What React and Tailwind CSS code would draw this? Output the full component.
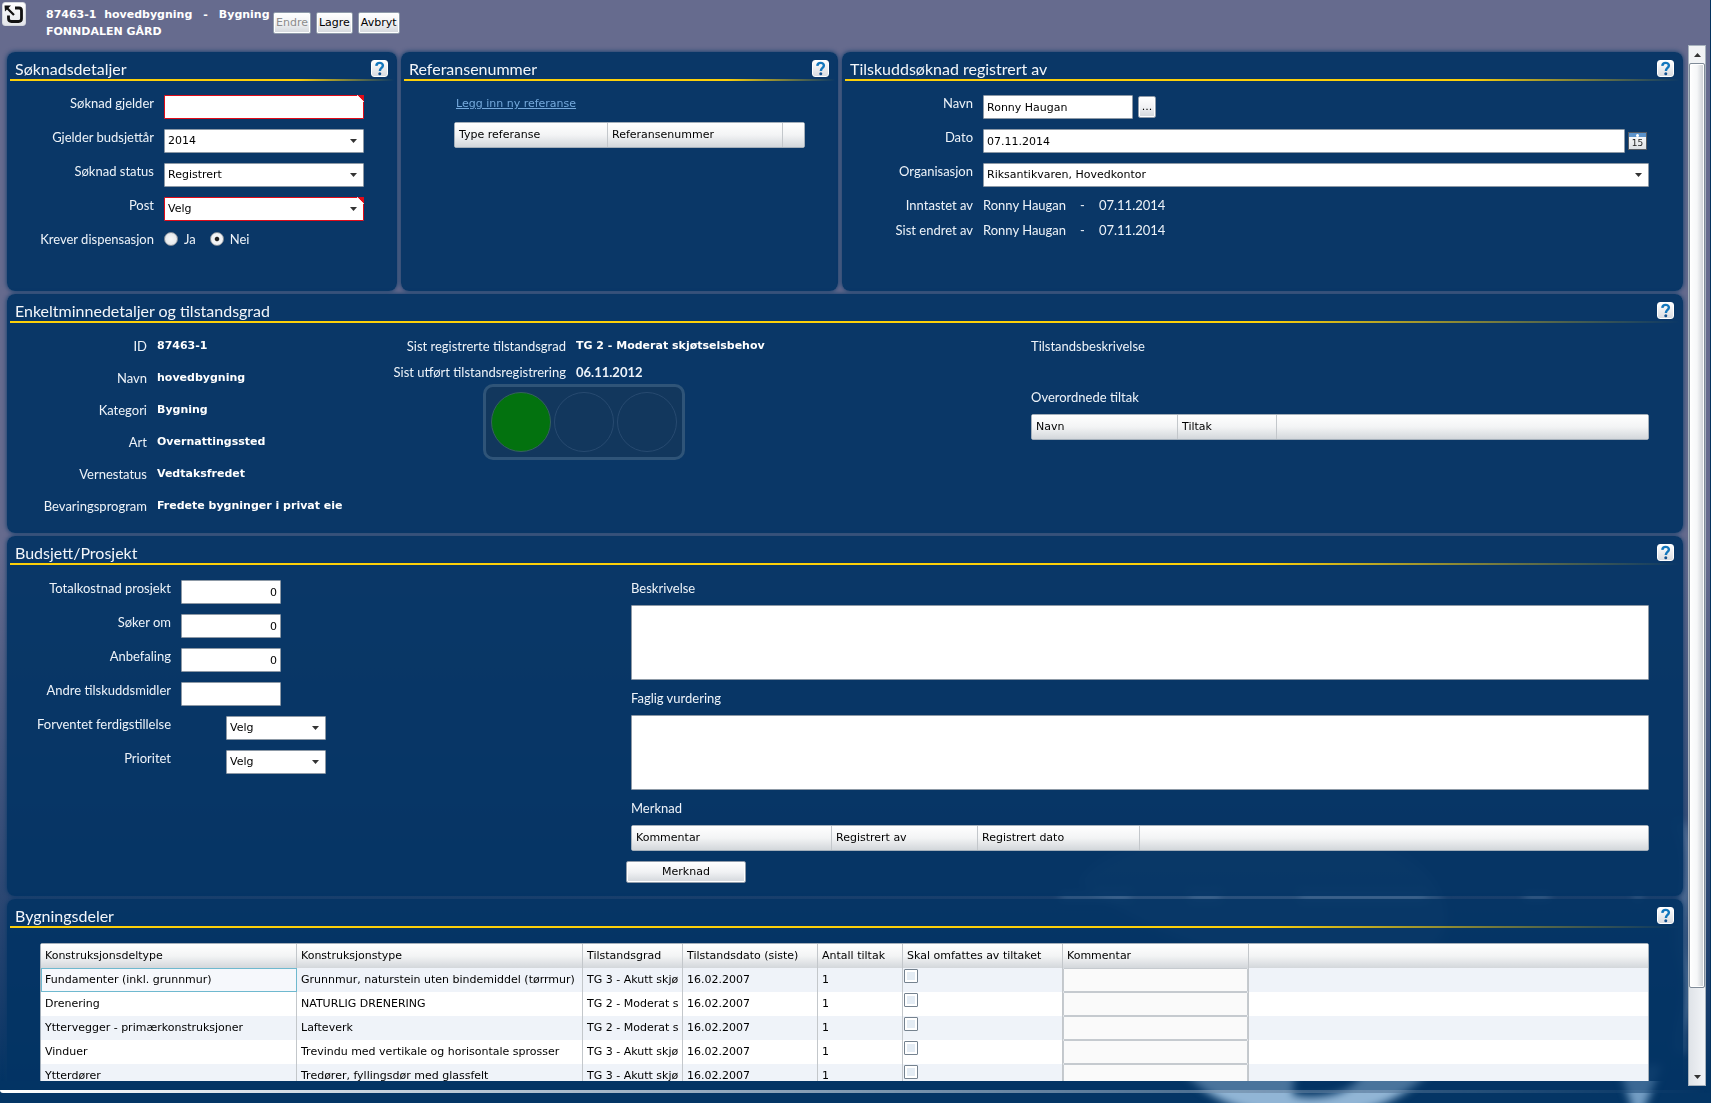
import React from "react";

const LABEL = "font-['Lato',sans-serif] text-[13px] leading-4 text-[#eef3f9]";
const FIELD =
  "h-6 rounded-[1px] border border-[#8d99a6] bg-white px-[3px] font-['DejaVu_Sans',sans-serif] text-[11px] text-black outline-none";
const BUTTON =
  "rounded-[2px] border border-[#8f9baa] bg-linear-to-b from-white via-[#f1f2f4] to-[#d3d7dc] text-[11px] text-black shadow-[inset_0_0_0_1px_#ffffff]";

function HelpButton({ label }) {
  return (
    <button
      type="button"
      aria-label={label}
      className="flex h-[17px] w-[17px] items-center justify-center rounded-[3px] border border-white bg-linear-to-b from-white to-[#d9dce1]"
    >
      <svg viewBox="0 0 16 16" className="h-[15px] w-[15px]" fill="none">
        <path d="M4.6 5.2C4.8 2.9 6.2 2 8.1 2c2.1 0 3.5 1.1 3.5 2.8C11.600 7.400 8.400 7.400 8.400 10.600" stroke="#1377bd" strokeWidth="2.6" />
        <circle cx="8.300" cy="13.600" r="1.600" fill="#12518f" />
      </svg>
    </button>
  );
}

function Panel({ title, className = "", children }) {
  return (
    <section
      className={`flex flex-col rounded-lg bg-[#033464]/93 shadow-[0_0_5px_#083767] ${className}`}
    >
      <header className="px-[3px]">
        <div className="flex h-[27px] items-center justify-between pt-1.5 pr-[6px] pl-[5px]">
          <h2 className="font-['Lato',sans-serif] text-base leading-5 text-[#f3f6fa]">{title}</h2>
          <HelpButton label={`Hjelp: ${title}`} />
        </div>
        <div className="h-0.5 bg-linear-to-r from-[#fdd00a] from-75% to-transparent" />
      </header>
      {children}
    </section>
  );
}

function Row({ label, htmlFor, labelClass, className = "min-h-6", children }) {
  return (
    <div className={`flex gap-[10px] ${className}`}>
      <label htmlFor={htmlFor} className={`${LABEL} shrink-0 text-right ${labelClass}`}>
        {label}
      </label>
      {children}
    </div>
  );
}

function ErrorCorner() {
  return (
    <svg viewBox="0 0 7 7" className="pointer-events-none absolute top-0 right-0 h-[7px] w-[7px]">
      <path d="M0 0H7V7Z" fill="#e00b18" />
      <path d="M0 0L7 7" stroke="#ffffff" strokeWidth="0.8" />
    </svg>
  );
}

function Select({ id, value, invalid = false, className = "" }) {
  return (
    <div className={`relative ${className}`}>
      <select
        id={id}
        defaultValue={value}
        className={`${FIELD} block w-full appearance-none ${invalid ? "border-[#e00b18]" : ""}`}
      >
        <option>{value}</option>
      </select>
      <svg viewBox="0 0 7 4" className="pointer-events-none absolute top-[10px] right-[7px] h-1 w-[7px]">
        <path d="M0 0H7L3.500 4Z" fill="#333333" />
      </svg>
      {invalid && <ErrorCorner />}
    </div>
  );
}

function HeadCells({ columns }) {
  return (
    <>
      {columns.map((name, i) => (
        <th
          key={i}
          className={`h-6 truncate px-1 text-left font-normal ${i < columns.length - 1 ? "border-r border-[#c3c7cb]" : ""}`}
        >
          {name}
        </th>
      ))}
    </>
  );
}

const TABLE =
  "w-full table-fixed border-separate border-spacing-0 rounded-[2px] border border-[#a4afba] text-[11px] leading-4 text-black";
const THEAD = "bg-linear-to-b from-white via-[#f3f4f5] to-[#d3d7db]";

function HeaderTable({ label, widths, columns }) {
  return (
    <table aria-label={label} className={TABLE}>
      <colgroup>
        {widths.map((w, i) => (
          <col key={i} className={w} />
        ))}
      </colgroup>
      <thead className={THEAD}>
        <tr>
          <HeadCells columns={columns} />
        </tr>
      </thead>
    </table>
  );
}

const FACTS = [
  ["ID", "87463-1"],
  ["Navn", "hovedbygning"],
  ["Kategori", "Bygning"],
  ["Art", "Overnattingssted"],
  ["Vernestatus", "Vedtaksfredet"],
  ["Bevaringsprogram", "Fredete bygninger i privat eie"],
];

const AMOUNTS = [
  ["total", "Totalkostnad prosjekt", "0"],
  ["soker", "Søker om", "0"],
  ["anbefaling", "Anbefaling", "0"],
  ["andre", "Andre tilskuddsmidler", ""],
];

const PARTS = [
  ["Fundamenter (inkl. grunnmur)", "Grunnmur, naturstein uten bindemiddel (tørrmur)", "TG 3 - Akutt skjø"],
  ["Drenering", "NATURLIG DRENERING", "TG 2 - Moderat s"],
  ["Yttervegger - primærkonstruksjoner", "Lafteverk", "TG 2 - Moderat s"],
  ["Vinduer", "Trevindu med vertikale og horisontale sprosser", "TG 3 - Akutt skjø"],
  ["Ytterdører", "Tredører, fyllingsdør med glassfelt", "TG 3 - Akutt skjø"],
];

function Backdrop() {
  return (
    <svg
      viewBox="0 0 720 320"
      className="pointer-events-none absolute right-0 bottom-0 h-[320px] w-[720px]"
      fill="none"
    >
      <defs>
        <filter id="soft" x="-10%" y="-10%" width="120%" height="120%">
          <feGaussianBlur stdDeviation="4" />
        </filter>
      </defs>
      <g filter="url(#soft)" stroke="#b3d4f1">
        <path d="M188 280C220 318 260 332 318 332C376 332 412 316 446 280L376 284C368 320 310 320 300 312L304 284Z" fill="#b3d4f1" strokeWidth="4" />
        <path d="M628 282L672 282L652 330L644 330Z" fill="#8fb7dc" stroke="none" />
        <path d="M70 114H140M200 114H230M310 114H436M534 114H560M644 114H652" strokeWidth="7" opacity="0.5" />
        <path d="M690 40C712 90 682 130 694 180S684 240 690 270" strokeWidth="8" opacity="0.35" />
        <path d="M90 100C120 40 400 10 450 110S250 220 90 100Z" fill="#b3d4f1" stroke="none" opacity="0.25" />
      </g>
      <rect x="0" y="298" width="714" height="12" fill="#033464" opacity="0.6" />
    </svg>
  );
}

function ScrollBar() {
  return (
    <div className="flex w-[18px] shrink-0 flex-col border border-[#a7b2bd] bg-linear-to-r from-[#dfe3e8] to-[#f2f4f7]">
      <button type="button" aria-label="Rull opp" className="flex h-[17px] items-center justify-center bg-[#f1f3f5]">
        <svg viewBox="0 0 7 4" className="h-1 w-[7px]">
          <path d="M0 4H7L3.500 0Z" fill="#333333" />
        </svg>
      </button>
      <div className="flex min-h-0 flex-1 flex-col">
        <div className="basis-[92%] rounded-[2px] border border-[#7f8b98] bg-linear-to-r from-white via-[#f6f7f8] to-[#c9cdd2] shadow-[inset_0_0_0_1px_#ffffff]" />
      </div>
      <button type="button" aria-label="Rull ned" className="flex h-[17px] items-center justify-center">
        <svg viewBox="0 0 7 4" className="h-1 w-[7px]">
          <path d="M0 0H7L3.500 4Z" fill="#333333" />
        </svg>
      </button>
    </div>
  );
}

export default function App() {
  return (
    <div className="relative flex h-screen flex-col overflow-hidden border-r border-[#04335f] bg-linear-to-b from-[#666b8e] from-50% to-[#033464] to-98% font-['DejaVu_Sans',sans-serif] text-[11px]">
      <Backdrop />

      <header className="relative flex h-[45px] shrink-0 items-start">
        <button
          type="button"
          aria-label="Tilbake"
          className="mt-0.5 ml-0.5 flex h-6 w-6 items-center justify-center rounded-[3px] border border-[#d5d8de] bg-linear-to-b from-white to-[#e4e6ea]"
        >
          <svg viewBox="0 0 22 22" className="h-[22px] w-[22px]" fill="none" stroke="#111111">
            <path d="M12 5H16Q18.500 5 18.500 7.500V15.500Q18.500 18.500 15.500 18.500H8.500Q5.500 18.500 5.500 15.500V12.500" strokeWidth="2.800" />
            <path d="M3.500 4.500L11 12" strokeWidth="2.200" />
            <path d="M1.500 2.500H8L2 8.500Z" fill="#111111" stroke="none" />
          </svg>
        </button>
        <div className="ml-5 w-[227px] pt-2 font-bold text-white">
          <h1 className="flex h-3 overflow-hidden leading-[14px] whitespace-pre">
            <span>87463-1&nbsp; hovedbygning</span>
            <span className="px-[11px]">-</span>
            <span>Bygning</span>
          </h1>
          <p className="mt-1 leading-4">FONNDALEN GÅRD</p>
        </div>
        <div className="mt-3 flex gap-[5px]">
          <button type="button" disabled className={`${BUTTON} h-[22px] px-[2px] disabled:text-[#8c8c8c]`}>
            Endre
          </button>
          <button type="button" className={`${BUTTON} h-[22px] px-[2px]`}>
            Lagre
          </button>
          <button type="button" className={`${BUTTON} h-[22px] px-[2px]`}>
            Avbryt
          </button>
        </div>
      </header>

      <div className="relative flex min-h-0 flex-1 pr-1">
        <main className="mb-[5px] flex min-w-0 flex-1 flex-col gap-[3px] overflow-hidden pt-[7px] pr-[5px] pl-[7px]">
          <div className="flex shrink-0 gap-1">
            <Panel title="Søknadsdetaljer" className="min-h-[239px] w-[390px]">
              <form className="flex flex-col gap-[10px] pt-[14px] pr-[33px]">
                <Row label="Søknad gjelder" htmlFor="gjelder" labelClass="w-[147px]">
                  <div className="relative flex-1">
                    <input id="gjelder" className={`${FIELD} block w-full border-[#e00b18]`} />
                    <ErrorCorner />
                  </div>
                </Row>
                <Row label="Gjelder budsjettår" htmlFor="aar" labelClass="w-[147px]">
                  <Select id="aar" value="2014" className="flex-1" />
                </Row>
                <Row label="Søknad status" htmlFor="status" labelClass="w-[147px]">
                  <Select id="status" value="Registrert" className="flex-1" />
                </Row>
                <Row label="Post" htmlFor="post" labelClass="w-[147px]">
                  <Select id="post" value="Velg" invalid className="flex-1" />
                </Row>
                <fieldset className="flex gap-[10px]">
                  <legend className={`${LABEL} float-left w-[147px] text-right`}>Krever dispensasjon</legend>
                  <div className="flex gap-[14px]">
                    {["Ja", "Nei"].map((name) => (
                      <label key={name} className={`${LABEL} flex items-center gap-1.5`}>
                        <input
                          type="radio"
                          name="dispensasjon"
                          defaultChecked={name === "Nei"}
                          className="h-[14px] w-[14px] appearance-none rounded-full border border-[#7d8793] bg-white bg-radial from-[#f6f7f8] to-[#dfe2e6] checked:from-[#222222] checked:from-20% checked:to-[#f3f4f5] checked:to-32%"
                        />
                        {name}
                      </label>
                    ))}
                  </div>
                </fieldset>
              </form>
            </Panel>

            <Panel title="Referansenummer" className="min-h-[239px] w-[437px]">
              <div className="pt-[15px] pr-[33px] pl-[53px]">
                <a href="#referanse" className="ml-0.5 block w-fit leading-4 text-[#75a9dc] underline">
                  Legg inn ny referanse
                </a>
                <div className="mt-[10px]">
                  <HeaderTable
                    label="Referanser"
                    widths={["w-[153px]", "w-[175px]", ""]}
                    columns={["Type referanse", "Referansenummer", ""]}
                  />
                </div>
              </div>
            </Panel>

            <Panel title="Tilskuddsøknad registrert av" className="min-h-[239px] flex-1">
              <form className="flex flex-col gap-[10px] pt-[14px] pr-[34px]">
                <Row label="Navn" htmlFor="navn" labelClass="w-[131px]">
                  <input id="navn" defaultValue="Ronny Haugan" className={`${FIELD} w-[150px]`} />
                  <button type="button" aria-label="Velg person" className={`${BUTTON} -ml-[5px] mt-px h-[22px] w-[18px]`}>
                    ...
                  </button>
                </Row>
                <Row label="Dato" htmlFor="dato" labelClass="w-[131px]">
                  <input id="dato" defaultValue="07.11.2014" className={`${FIELD} min-w-0 flex-1`} />
                  <button
                    type="button"
                    aria-label="Åpne kalender"
                    className="mt-[3px] mr-0.5 -ml-[7px] flex h-[18px] w-[19px] flex-col border border-[#555b63] bg-linear-to-b from-white to-[#dde0e4] text-[9px] leading-3 text-[#222222]"
                  >
                    <span className="flex h-1 w-full items-center justify-center bg-[#5b93cc]">
                      <span className="h-[3px] w-[3px] rounded-full bg-white" />
                    </span>
                    <span className="w-full text-center">15</span>
                  </button>
                </Row>
                <Row label="Organisasjon" htmlFor="org" labelClass="w-[131px]">
                  <Select id="org" value="Riksantikvaren, Hovedkontor" className="flex-1" />
                </Row>
                <dl className={`${LABEL} flex flex-col gap-[9px]`}>
                  {["Inntastet av", "Sist endret av"].map((name) => (
                    <div key={name} className="flex gap-[10px]">
                      <dt className="w-[131px] text-right">{name}</dt>
                      <dd className="flex gap-[14px]">
                        <span>Ronny Haugan</span>
                        <span>-</span>
                        <span>07.11.2014</span>
                      </dd>
                    </div>
                  ))}
                </dl>
              </form>
            </Panel>
          </div>

          <Panel title="Enkeltminnedetaljer og tilstandsgrad" className="min-h-[239px] shrink-0">
            <div className="flex pt-[15px] pr-[34px]">
              <dl className="flex w-[380px] flex-col gap-4">
                {FACTS.map(([name, value]) => (
                  <div key={name} className="flex gap-[10px]">
                    <dt className={`${LABEL} w-[140px] text-right`}>{name}</dt>
                    <dd className="leading-4 font-bold text-white">{value}</dd>
                  </div>
                ))}
              </dl>
              <div className="flex-1">
                <dl className="flex flex-col gap-[10px]">
                  <div className="flex gap-[10px]">
                    <dt className={`${LABEL} w-[179px] text-right`}>Sist registrerte tilstandsgrad</dt>
                    <dd className="leading-4 font-bold text-white">TG 2 - Moderat skjøtselsbehov</dd>
                  </div>
                  <div className="flex gap-[10px]">
                    <dt className={`${LABEL} w-[179px] text-right`}>Sist utført tilstandsregistrering</dt>
                    <dd className={`${LABEL} font-bold`}>06.11.2012</dd>
                  </div>
                </dl>
                <div className="mt-1 ml-24 flex w-fit gap-[3px] rounded-[10px] border-[3px] border-[#2f5478] bg-[#12375d] p-[5px]">
                  <div className="h-[60px] w-[60px] rounded-full border border-[#35605f] bg-[#03720f]" />
                  <div className="h-[60px] w-[60px] rounded-full border border-[#274a70]" />
                  <div className="h-[60px] w-[60px] rounded-full border border-[#274a70]" />
                </div>
              </div>
              <div className="w-[618px]">
                <p className={LABEL}>Tilstandsbeskrivelse</p>
                <p className={`${LABEL} mt-[35px] mb-[9px]`}>Overordnede tiltak</p>
                <HeaderTable
                  label="Overordnede tiltak"
                  widths={["w-[146px]", "w-[99px]", ""]}
                  columns={["Navn", "Tiltak", ""]}
                />
              </div>
            </div>
          </Panel>

          <Panel title="Budsjett/Prosjekt" className="min-h-[360px] shrink-0">
            <form className="flex pt-[15px] pr-[34px]">
              <div className="flex w-[619px] flex-col gap-[10px]">
                {AMOUNTS.map(([id, name, value]) => (
                  <Row key={id} label={name} htmlFor={id} labelClass="w-[164px]">
                    <input id={id} defaultValue={value} className={`${FIELD} w-[100px] text-right`} />
                  </Row>
                ))}
                <Row label="Forventet ferdigstillelse" htmlFor="ferdig" labelClass="w-[164px]">
                  <Select id="ferdig" value="Velg" className="ml-[45px] w-[100px]" />
                </Row>
                <Row label="Prioritet" htmlFor="prioritet" labelClass="w-[164px]">
                  <Select id="prioritet" value="Velg" className="ml-[45px] w-[100px]" />
                </Row>
              </div>
              <div className="min-w-0 flex-1 pl-[5px]">
                <label htmlFor="beskrivelse" className={`${LABEL} mb-[9px] block`}>
                  Beskrivelse
                </label>
                <textarea id="beskrivelse" className="block h-[75px] w-full resize-none rounded-[1px] border border-[#8d99a6] bg-white p-1 text-black outline-none" />
                <label htmlFor="vurdering" className={`${LABEL} mt-[10px] mb-[9px] block`}>
                  Faglig vurdering
                </label>
                <textarea id="vurdering" className="block h-[75px] w-full resize-none rounded-[1px] border border-[#8d99a6] bg-white p-1 text-black outline-none" />
                <p className={`${LABEL} mt-[10px] mb-[9px]`}>Merknad</p>
                <HeaderTable
                  label="Merknader"
                  widths={["w-[200px]", "w-[146px]", "w-[162px]", ""]}
                  columns={["Kommentar", "Registrert av", "Registrert dato", ""]}
                />
                <button type="button" className={`${BUTTON} mt-[10px] -ml-[5px] h-[22px] w-[120px]`}>
                  Merknad
                </button>
              </div>
            </form>
          </Panel>

          <Panel title="Bygningsdeler" className="shrink-0">
            <div className="pt-[15px] pr-[34px] pb-10 pl-[33px]">
              <table aria-label="Bygningsdeler" className={TABLE}>
                <colgroup>
                  <col className="w-[256px]" />
                  <col className="w-[286px]" />
                  <col className="w-[100px]" />
                  <col className="w-[135px]" />
                  <col className="w-[85px]" />
                  <col className="w-[160px]" />
                  <col className="w-[186px]" />
                  <col />
                </colgroup>
                <thead className={THEAD}>
                  <tr>
                    <HeadCells
                      columns={[
                        "Konstruksjonsdeltype",
                        "Konstruksjonstype",
                        "Tilstandsgrad",
                        "Tilstandsdato (siste)",
                        "Antall tiltak",
                        "Skal omfattes av tiltaket",
                        "Kommentar",
                        "",
                      ]}
                    />
                  </tr>
                </thead>
                <tbody>
                  {PARTS.map(([part, kind, grade], i) => (
                    <tr key={part} className="h-6 bg-white odd:bg-[#eff3f9]">
                      <td
                        className={`whitespace-nowrap ${
                          i === 0
                            ? "border border-[#6fb9cf] bg-[#f6f8fc] px-[3px]"
                            : "border-r border-[#c3c7cb] px-1"
                        }`}
                      >
                        {part}
                      </td>
                      <td className="overflow-hidden border-r border-[#c3c7cb] pl-1 whitespace-nowrap">{kind}</td>
                      <td className="overflow-hidden border-r border-[#c3c7cb] pl-1 whitespace-nowrap">{grade}</td>
                      <td className="border-r border-[#c3c7cb] px-1">16.02.2007</td>
                      <td className="border-r border-[#c3c7cb] px-1">1</td>
                      <td className="border-r border-[#c3c7cb] pt-px pl-px align-top">
                        <input
                          type="checkbox"
                          aria-label={`${part} omfattes av tiltaket`}
                          className="block h-[14px] w-[14px] appearance-none rounded-[1px] border border-[#75828f] bg-[#e4ecf4] shadow-[inset_0_0_0_2px_#ffffff]"
                        />
                      </td>
                      <td className="border-r border-[#c3c7cb] p-0">
                        <input
                          aria-label={`Kommentar til ${part}`}
                          className="block h-6 w-full rounded-[1px] border border-[#c5cacf] bg-[#fafafa] px-1 outline-none"
                        />
                      </td>
                      <td />
                    </tr>
                  ))}
                </tbody>
              </table>
            </div>
          </Panel>
        </main>
        <ScrollBar />
      </div>

      <footer className="relative h-[17px] shrink-0 pt-1">
        <div className="h-[3px] rounded-bl-full bg-linear-to-r from-white to-transparent" />
        <div className="h-[10px] bg-[#0a3a6b]/20" />
      </footer>
    </div>
  );
}
